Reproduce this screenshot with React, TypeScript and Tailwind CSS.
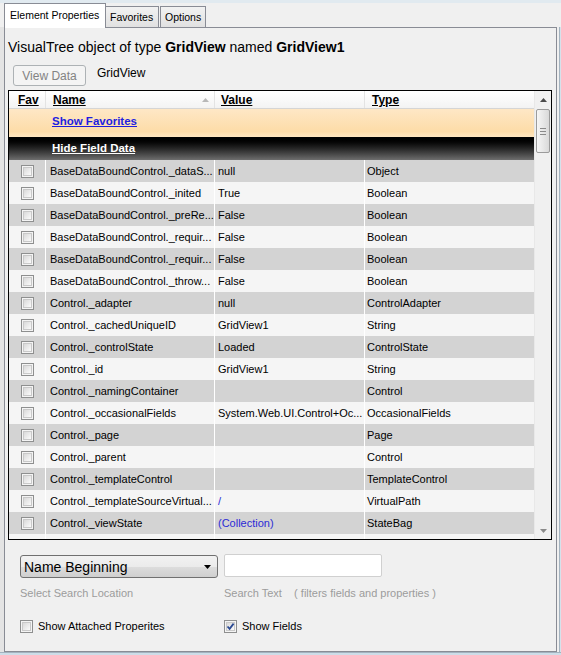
import React from 'react';

type Row = { name: string; value: string; type: string; link?: boolean };

const ROWS: Row[] = [
  { name: 'BaseDataBoundControl._dataS...', value: 'null', type: 'Object' },
  { name: 'BaseDataBoundControl._inited', value: 'True', type: 'Boolean' },
  { name: 'BaseDataBoundControl._preRe...', value: 'False', type: 'Boolean' },
  { name: 'BaseDataBoundControl._requir...', value: 'False', type: 'Boolean' },
  { name: 'BaseDataBoundControl._requir...', value: 'False', type: 'Boolean' },
  { name: 'BaseDataBoundControl._throw...', value: 'False', type: 'Boolean' },
  { name: 'Control._adapter', value: 'null', type: 'ControlAdapter' },
  { name: 'Control._cachedUniqueID', value: 'GridView1', type: 'String' },
  { name: 'Control._controlState', value: 'Loaded', type: 'ControlState' },
  { name: 'Control._id', value: 'GridView1', type: 'String' },
  { name: 'Control._namingContainer', value: '', type: 'Control' },
  { name: 'Control._occasionalFields', value: 'System.Web.UI.Control+Oc...', type: 'OccasionalFields' },
  { name: 'Control._page', value: '', type: 'Page' },
  { name: 'Control._parent', value: '', type: 'Control' },
  { name: 'Control._templateControl', value: '', type: 'TemplateControl' },
  { name: 'Control._templateSourceVirtual...', value: '/', type: 'VirtualPath', link: true },
  { name: 'Control._viewState', value: '(Collection)', type: 'StateBag', link: true },
  { name: '', value: '', type: '' },
];

const Check: React.FC<{ checked?: boolean }> = ({ checked }) => (
  <span className="relative inline-block w-[13px] h-[13px] shrink-0 border border-[#8e8f8f] bg-[#f4f4f4]">
    <span className="absolute inset-[1px] border border-[#c9c9c9] bg-gradient-to-br from-[#d9d9d9] to-[#fbfbfb]" />
    {checked && (
      <svg className="absolute inset-0" width="11" height="11" viewBox="0 0 11 11">
        <path d="M2.5 5.5 L4.6 7.8 L8.6 2.6" fill="none" stroke="#2b4a92" strokeWidth="1.8" />
      </svg>
    )}
  </span>
);

const TabButton: React.FC<{ label: string; active?: boolean; width: string }> = ({ label, active, width }) =>
  active ? (
    <div className={`${width} h-[25px] -mb-px relative z-10 border border-b-0 border-[#898c95] bg-white pl-[5px] pt-[4px] text-[10.5px] leading-[14px] text-black`}>
      {label}
    </div>
  ) : (
    <div className={`${width} h-[21px] border border-b-0 border-[#898c95] bg-gradient-to-b from-[#f2f2f2] to-[#e1e1e1] pl-[4px] pt-[3px] text-[10.5px] leading-[14px] text-black`}>
      {label}
    </div>
  );

const App: React.FC = () => {
  return (
    <div className="w-[561px] h-[655px] bg-[#f0f0f0] flex flex-col overflow-hidden font-['Liberation_Sans',Arial,sans-serif] text-black">
      <div className="h-[3px] bg-[#e1eaf0] shrink-0" />
      {/* tabs */}
      <div className="h-[24px] flex items-end pl-[4px] shrink-0">
        <TabButton label="Element Properties" active width="w-[102px]" />
        <TabButton label="Favorites" width="w-[54px] -ml-px" />
        <TabButton label="Options" width="w-[46px] ml-px" />
      </div>

      <div className="flex flex-1 min-h-0">
        <div className="w-[4px] shrink-0 bg-[#e4e4e4]" />
        {/* tab page */}
        <div className="w-[553px] h-[625px] border border-[#898c95] bg-[#f0f0f0] flex flex-col">
          <div className="mt-[10px] pl-[3px] h-[18px] text-[14px] leading-[18px] whitespace-nowrap">
            VisualTree object of type <b>GridView</b> named <b>GridView1</b>
          </div>

          <div className="mt-[9px] ml-[8px] flex items-start h-[21px]">
            <div className="w-[73px] h-[21px] rounded-[3px] border border-[#adb2b5] bg-[#f4f4f4] flex items-center justify-center text-[12px] text-[#838383]">
              View Data
            </div>
            <div className="ml-[11px] -mt-[1px] text-[12px] leading-[18px]">GridView</div>
          </div>

          {/* grid */}
          <div className="mt-[4px] ml-[3px] w-[544px] h-[450px] border border-black flex bg-white">
            <div className="w-[525px] h-full overflow-hidden flex flex-col text-[11px]">
              <div className="h-[18px] shrink-0 flex bg-gradient-to-b from-white to-[#f3f3f3] border-b border-[#d5d5d5] text-[12px] font-bold">
                <div className="w-[37px] pl-[9px] border-r border-[#e3e3e3] leading-[18px]"><span className="underline">Fav</span></div>
                <div className="w-[169px] pl-[7px] pr-[5px] border-r border-[#e3e3e3] leading-[18px] flex justify-between items-center">
                  <span className="underline">Name</span>
                  <svg width="7" height="4" viewBox="0 0 7 4"><path d="M0 4 L3.5 0 L7 4 Z" fill="#b8b8b8" /></svg>
                </div>
                <div className="w-[150px] pl-[6px] border-r border-[#e3e3e3] leading-[18px]"><span className="underline">Value</span></div>
                <div className="flex-1 pl-[7px] leading-[18px]"><span className="underline">Type</span></div>
              </div>
              <div className="h-[28px] shrink-0 flex items-center bg-[linear-gradient(#fee7c6,#fddca8_80%,#fee6c0)]">
                <span className="ml-[43px] -mt-[2px] text-[11.5px] font-bold underline text-[#1e1ee0]">Show Favorites</span>
              </div>
              <div className="h-[23px] shrink-0 flex items-center bg-gradient-to-b from-black to-[#6e6e6e]">
                <span className="ml-[43px] text-[11.5px] font-bold underline text-white">Hide Field Data</span>
              </div>
              {ROWS.map((r, i) => (
                <div key={i} className={`h-[22px] shrink-0 flex items-center ${i % 2 ? 'bg-[#f5f5f5]' : 'bg-[#d3d3d3]'}`}>
                  <div className="w-[37px] h-full flex items-center justify-center border-r border-white">
                    <Check />
                  </div>
                  <div className="w-[169px] h-full pl-[4px] flex items-center border-r border-white whitespace-nowrap overflow-hidden">{r.name}</div>
                  <div className={`w-[150px] h-full pl-[3px] flex items-center border-r border-white whitespace-nowrap overflow-hidden ${r.link ? 'text-[#2b2bd6]' : ''}`}>{r.value}</div>
                  <div className="flex-1 h-full pl-[2px] flex items-center whitespace-nowrap">{r.type}</div>
                </div>
              ))}
            </div>
            {/* scrollbar */}
            <div className="w-[17px] h-full bg-[#f0f0f0] border-l border-[#e8e8e8] flex flex-col items-center">
              <div className="h-[17px] w-full flex items-center justify-center">
                <svg width="7" height="4" viewBox="0 0 7 4"><path d="M0 4 L3.5 0 L7 4 Z" fill="#4a4a4a" /></svg>
              </div>
              <div className="mt-[1px] w-[14px] h-[44px] rounded-[2px] border border-[#9b9b9b] bg-gradient-to-r from-[#f6f6f6] to-[#d9d9d9] flex flex-col items-center justify-center gap-[2px]">
                <span className="w-[6px] h-px bg-[#8a8a8a]" />
                <span className="w-[6px] h-px bg-[#8a8a8a]" />
                <span className="w-[6px] h-px bg-[#8a8a8a]" />
              </div>
              <div className="flex-1" />
              <div className="h-[16px] w-full flex items-center justify-center">
                <svg width="7" height="4" viewBox="0 0 7 4"><path d="M0 0 L3.5 4 L7 0 Z" fill="#8a8a8a" /></svg>
              </div>
            </div>
          </div>

          {/* search controls */}
          <div className="mt-[15px] ml-[15px] flex items-start">
            <div className="w-[204px]">
              <div className="w-[198px] h-[23px] rounded-[3px] border border-[#707070] bg-[linear-gradient(#f2f2f2,#ebebeb_50%,#dddddd_50%,#cfcfcf)] flex items-center justify-between pl-[3px] pr-[6px]">
                <span className="text-[14px] leading-[18px]">Name Beginning</span>
                <svg width="7" height="4" viewBox="0 0 7 4"><path d="M0 0 L7 0 L3.5 4 Z" fill="#000" /></svg>
              </div>
            </div>
            <div className="-mt-px w-[158px] h-[23px] rounded-[2px] border border-[#d0d0d0] bg-white" />
          </div>
          <div className="mt-[8px] ml-[15px] flex text-[11px] leading-[14px] text-[#9c9c9c]">
            <div className="w-[204px]">Select Search Location</div>
            <div className="whitespace-pre">Search Text    ( filters fields and properties )</div>
          </div>
          <div className="mt-[19px] ml-[15px] flex text-[11px] leading-[14px]">
            <div className="w-[204px] flex items-center gap-[5px]">
              <Check />
              <span>Show Attached Properites</span>
            </div>
            <div className="flex items-center gap-[5px]">
              <Check checked />
              <span>Show Fields</span>
            </div>
          </div>
        </div>
        <div className="w-[4px] shrink-0 flex">
          <div className="w-[2px]" />
          <div className="w-px bg-[#a3b3bf]" />
          <div className="w-px bg-[#d5e2eb]" />
        </div>
      </div>
      <div className="h-px bg-[#a3b3bf] shrink-0" />
      <div className="h-[2px] bg-[#cddde8] shrink-0" />
    </div>
  );
};

export default App;
